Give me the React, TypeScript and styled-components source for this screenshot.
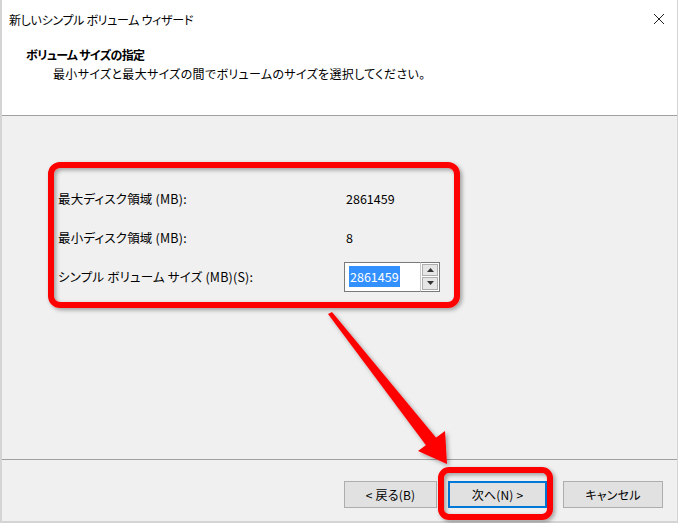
import React from "react"
import styled, { createGlobalStyle } from "styled-components"

const GlobalStyle = createGlobalStyle`
  html, body {
    margin: 0;
    padding: 0;
    background: #ffffff;
  }
  body {
    font-family: "Noto Sans CJK JP", "Noto Sans", sans-serif;
    font-size: 12px;
    color: #000;
    font-feature-settings: "palt";
  }
`

const Window = styled.div`
  position: relative;
  width: 678px;
  height: 523px;
  box-sizing: border-box;
  border-left: 2px solid #d4d4d4;
  border-right: 1px solid #d4d4d4;
  display: flex;
  flex-direction: column;
  overflow: hidden;
`

const TitleBar = styled.div`
  height: 38px;
  display: flex;
  align-items: center;
  justify-content: space-between;
  padding: 0 12px 0 7px;
  background: #fff;
`

const TitleText = styled.span`
  font-size: 12px;
  letter-spacing: -0.3px;
`

const CloseIcon = styled.svg`
  width: 12px;
  height: 12px;
`

const Header = styled.div`
  height: 78px;
  background: #fff;
  padding: 8px 0 0 24px;
  box-sizing: border-box;
  border-bottom: 1px solid #a0a0a0;
`

const HeaderTitle = styled.div`
  font-weight: 700;
  font-size: 12px;
  line-height: 18px;
  letter-spacing: -0.7px;
`

const HeaderSub = styled.div`
  padding-left: 27px;
  font-size: 12px;
  line-height: 19px;
  letter-spacing: 0.35px;
`

const Body = styled.div`
  flex: 1;
  background: #f0f0f0;
  padding: 63px 0 0 56px;
  box-sizing: border-box;
  border-bottom: 1px solid #a0a0a0;
`

const FormGrid = styled.div`
  display: grid;
  grid-template-columns: 288px auto;
  grid-auto-rows: 39px;
  align-items: center;
`

const Label = styled.span`
  font-size: 12.5px;
  letter-spacing: 0.2px;
`

const Value = styled.span`
  font-size: 12.5px;
`

const Spin = styled.div`
  display: flex;
  align-items: stretch;
  height: 30px;
  width: 96px;
  margin-left: -2px;
`

const SpinInput = styled.div`
  flex: 1;
  background: #fff;
  border: 1px solid #7a7a7a;
  border-right: none;
  display: flex;
  align-items: center;
  padding-left: 4px;
  font-size: 12.5px;
`

const Selected = styled.span`
  background: #3390ff;
  color: #fff;
  padding: 1px 1px;
`

const SpinButtons = styled.div`
  width: 20px;
  display: flex;
  flex-direction: column;
  border: 1px solid #7a7a7a;
  border-left: 1px solid #c8c8c8;
  background: #fff;
  padding: 1px;
  box-sizing: border-box;
  gap: 1px;
`

const SpinBtn = styled.div`
  flex: 1;
  background: #e5e5e5;
  border: 1px solid #adadad;
  display: flex;
  align-items: center;
  justify-content: center;
`

const Footer = styled.div`
  height: 63px;
  background: #f0f0f0;
  display: flex;
  justify-content: flex-end;
  align-items: flex-start;
  padding: 21px 14px 0 0;
  box-sizing: border-box;
  border-bottom: 2px solid #d4d4d4;
`

const Button = styled.div<{ $w: number; $default?: boolean; $gap?: number }>`
  width: ${(p) => p.$w}px;
  height: 27px;
  box-sizing: border-box;
  margin-left: ${(p) => p.$gap ?? 0}px;
  background: #e1e1e1;
  border: ${(p) => (p.$default ? "2px solid #0078d7" : "1px solid #adadad")};
  display: flex;
  align-items: center;
  justify-content: center;
  font-size: 12px;
  letter-spacing: 0.2px;
  white-space: pre;
`

const Overlay = styled.svg`
  position: absolute;
  left: -2px;
  top: 0;
  width: 680px;
  height: 523px;
  pointer-events: none;
`

export default function App() {
  return (
    <>
      <GlobalStyle />
      <Window>
        <TitleBar>
          <TitleText>新しいシンプル ボリューム ウィザード</TitleText>
          <CloseIcon viewBox="0 0 12 12">
            <path d="M1 1L11 11M11 1L1 11" stroke="#222" strokeWidth="1" />
          </CloseIcon>
        </TitleBar>
        <Header>
          <HeaderTitle>ボリューム サイズの指定</HeaderTitle>
          <HeaderSub>最小サイズと最大サイズの間でボリュームのサイズを選択してください。</HeaderSub>
        </Header>
        <Body>
          <FormGrid>
            <Label>最大ディスク領域 (MB):</Label>
            <Value>2861459</Value>
            <Label>最小ディスク領域 (MB):</Label>
            <Value>8</Value>
            <Label>シンプル ボリューム サイズ (MB)(S):</Label>
            <Spin>
              <SpinInput>
                <Selected>2861459</Selected>
              </SpinInput>
              <SpinButtons>
                <SpinBtn>
                  <svg width="7" height="4" viewBox="0 0 7 4">
                    <path d="M0 4L3.5 0L7 4Z" fill="#333" />
                  </svg>
                </SpinBtn>
                <SpinBtn>
                  <svg width="7" height="4" viewBox="0 0 7 4">
                    <path d="M0 0L3.5 4L7 0Z" fill="#333" />
                  </svg>
                </SpinBtn>
              </SpinButtons>
            </Spin>
          </FormGrid>
        </Body>
        <Footer>
          <Button $w={93}>{"< 戻る(B)"}</Button>
          <Button $w={99} $default $gap={11}>{"次へ(N) >"}</Button>
          <Button $w={100} $gap={16}>キャンセル</Button>
        </Footer>
        <Overlay viewBox="0 0 680 523">
          <defs>
            <filter id="sh" x="-10%" y="-10%" width="130%" height="130%">
              <feDropShadow dx="2" dy="2" stdDeviation="2" floodColor="#000" floodOpacity="0.35" />
            </filter>
          </defs>
          <g filter="url(#sh)">
            <rect x="51" y="165" width="406" height="140" rx="9" fill="none" stroke="#ff0000" strokeWidth="6" />
            <rect x="441" y="470" width="109" height="47" rx="8" fill="none" stroke="#ff0000" strokeWidth="6" />
            <polygon points="328,314 332,312 438,440 428,448" fill="#ff0000" />
            <polygon points="418,451 447,464 445,431" fill="#ff0000" />
          </g>
        </Overlay>
      </Window>
    </>
  )
}
